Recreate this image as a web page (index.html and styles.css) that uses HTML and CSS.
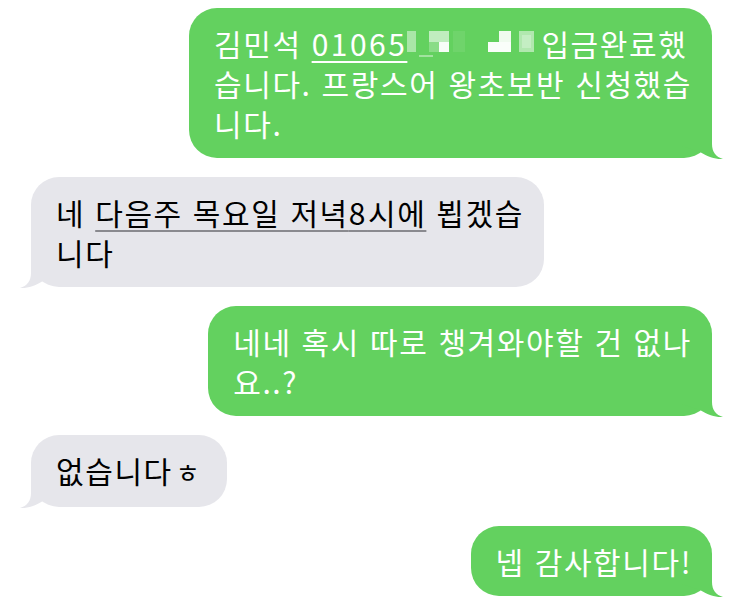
FILE: index.html
```html
<!DOCTYPE html>
<html lang="ko">
<head>
<meta charset="utf-8">
<title>메시지</title>
<link rel="stylesheet" href="styles.css">
</head>
<body>
<main class="thread">

  <div class="msg sent">
    <p class="text">김민석 <span class="link link-light num">01065</span><svg class="redact" width="134" height="40" viewBox="0 0 134 40" aria-hidden="true">
        <rect x="0" y="8" width="9" height="21" fill="#ffffff" fill-opacity="0.45"/>
        <rect x="12" y="32" width="14" height="2" fill="#ffffff" fill-opacity="0.4"/>
        <rect x="22" y="8" width="20" height="11" fill="#ffffff" fill-opacity="0.6"/>
        <rect x="32" y="19" width="10" height="10" fill="#ffffff" fill-opacity="0.95"/>
        <rect x="22" y="19" width="10" height="10" fill="#ffffff" fill-opacity="0.25"/>
        <rect x="46" y="8" width="12" height="21" fill="#ffffff" fill-opacity="0.08"/>
        <rect x="81" y="19" width="23" height="10" fill="#ffffff" fill-opacity="0.97"/>
        <rect x="92" y="8" width="12" height="11" fill="#ffffff" fill-opacity="0.9"/>
        <rect x="112" y="8" width="15" height="21" fill="#ffffff" fill-opacity="0.5"/>
        <rect x="115" y="12" width="9" height="13" fill="#ffffff" fill-opacity="0.25"/>
      </svg>입금완료했<br>습니다. 프랑스어 왕초보반 신청했습<br>니다.</p>
    <svg class="tail" width="42" height="32" viewBox="-30 -30 42 32" aria-hidden="true"><path d="M -30 -30 H 0 V -14 C 0 -6 4 -1 11 1 C 4 1.6 -4 -1 -12 -6 L -30 -12 Z"/></svg>
  </div>

  <div class="msg received">
    <p class="text">네 <span class="link link-dark">다음주 목요일 저녁<span class="num">8</span>시에</span> 뵙겠습<br>니다</p>
    <svg class="tail" width="42" height="32" viewBox="-30 -30 42 32" aria-hidden="true"><path d="M -30 -30 H 0 V -14 C 0 -6 4 -1 11 1 C 4 1.6 -4 -1 -12 -6 L -30 -12 Z"/></svg>
  </div>

  <div class="msg sent">
    <p class="text">네네 혹시 따로 챙겨와야할 건 없나<br>요..?</p>
    <svg class="tail" width="42" height="32" viewBox="-30 -30 42 32" aria-hidden="true"><path d="M -30 -30 H 0 V -14 C 0 -6 4 -1 11 1 C 4 1.6 -4 -1 -12 -6 L -30 -12 Z"/></svg>
  </div>

  <div class="msg received">
    <p class="text">없습니다<span class="jamo">ㅎ</span></p>
    <svg class="tail" width="42" height="32" viewBox="-30 -30 42 32" aria-hidden="true"><path d="M -30 -30 H 0 V -14 C 0 -6 4 -1 11 1 C 4 1.6 -4 -1 -12 -6 L -30 -12 Z"/></svg>
  </div>

  <div class="msg sent">
    <p class="text">넵 감사합니다!</p>
    <svg class="tail" width="42" height="32" viewBox="-30 -30 42 32" aria-hidden="true"><path d="M -30 -30 H 0 V -14 C 0 -6 4 -1 11 1 C 4 1.6 -4 -1 -12 -6 L -30 -12 Z"/></svg>
  </div>

</main>
</body>
</html>
```

FILE: styles.css
```css
* {
  box-sizing: border-box;
}

html,
body {
  margin: 0;
  padding: 0;
  background: #ffffff;
}

body {
  width: 743px;
  height: 614px;
  overflow: hidden;
  font-family: "Noto Sans CJK KR", "Noto Sans", sans-serif;
}

/* conversation column */
.thread {
  display: flex;
  flex-direction: column;
  align-items: flex-start;
  gap: 19px;
  padding: 8px 31px;
}

/* bubble */
.msg {
  position: relative;
  border-radius: 28px;
  padding: 15px 20px 15px 25px;
}

.msg .text {
  position: relative;
  z-index: 1;
  margin: 0;
  font-size: 30px;
  line-height: 40px;
  letter-spacing: 1.6px;
  white-space: nowrap;
  font-weight: 400;
}

.sent {
  align-self: flex-end;
  background: #63d15f;
  color: #ffffff;
}

.received {
  background: #e6e6eb;
  color: #000000;
}

/* tail under the bottom corner, drawn behind the text */
.tail {
  position: absolute;
  z-index: 0;
  bottom: -2px;
  display: block;
}

.sent .tail {
  right: -12px;
  fill: #63d15f;
}

.received .tail {
  left: -12px;
  fill: #e6e6eb;
  transform: scaleX(-1);
}

/* detected data links */
.link {
  text-decoration: underline;
  text-decoration-thickness: 2px;
  text-underline-offset: 5px;
}

.link-light {
  text-decoration-color: #ffffff;
}

.link-dark {
  text-decoration-color: #8a8a8f;
}

.num {
  letter-spacing: 2.5px;
}

/* masked digits of the account number */
.redact {
  display: inline-block;
  vertical-align: top;
}

.jamo {
  font-size: 26px;
  margin-left: 3px;
  margin-right: 6px;
}
```
